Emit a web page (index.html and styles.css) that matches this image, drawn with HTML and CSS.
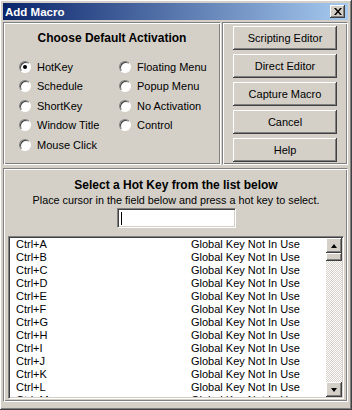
FILE: index.html
```html
<!DOCTYPE html>
<html lang="en">
<head>
    <meta charset="UTF-8">
    <meta name="viewport" content="width=device-width, initial-scale=1.0">
    <title>Add Macro</title>
    <link rel="stylesheet" href="styles.css">
</head>
<body>
    <div class="window">
        <div class="titlebar">
            <span class="title">Add Macro</span>
            <button class="close">
                <svg width="8" height="7" viewBox="0 0 8 7">
                    <path d="M0 0h2l2 2.5L6 0h2L5 3.5 8 7H6L4 4.5 2 7H0l3-3.5z" fill="#000"/>
                </svg>
            </button>
        </div>

        <div class="top">
            <div class="panel activation">
                <h2>Choose Default Activation</h2>
                <div class="radios">
                    <label class="radio"><span class="dot checked"></span>HotKey</label>
                    <label class="radio"><span class="dot"></span>Floating Menu</label>
                    <label class="radio"><span class="dot"></span>Schedule</label>
                    <label class="radio"><span class="dot"></span>Popup Menu</label>
                    <label class="radio"><span class="dot"></span>ShortKey</label>
                    <label class="radio"><span class="dot"></span>No Activation</label>
                    <label class="radio"><span class="dot"></span>Window Title</label>
                    <label class="radio"><span class="dot"></span>Control</label>
                    <label class="radio"><span class="dot"></span>Mouse Click</label>
                </div>
            </div>
            <div class="panel actions">
                <button class="btn">Scripting Editor</button>
                <button class="btn">Direct Editor</button>
                <button class="btn">Capture Macro</button>
                <button class="btn">Cancel</button>
                <button class="btn">Help</button>
            </div>
        </div>

        <div class="panel hotkeys">
            <h2>Select a Hot Key from the list below</h2>
            <p class="hint">Place cursor in the field below and press a hot key to select.</p>
            <div class="field"><span class="caret"></span></div>
            <div class="list">
                <div class="rows" id="rows"></div>
                <div class="scrollbar">
                    <div class="arrow up"><span></span></div>
                    <div class="thumb"></div>
                    <div class="track"></div>
                    <div class="arrow down"><span></span></div>
                </div>
            </div>
        </div>
    </div>
    <script>
        // fill the hot key list
        const rows = document.getElementById("rows");
        "ABCDEFGHIJKLM".split("").forEach((letter) => {
            const row = document.createElement("div");
            row.className = "row";
            row.innerHTML = `<span>Ctrl+${letter}</span><span>Global Key Not In Use</span>`;
            rows.appendChild(row);
        });
    </script>
</body>
</html>
```
FILE: styles.css
```css
body {
    margin: 0;
    font-family: "Liberation Sans", Arial, sans-serif;
    font-size: 11px;
    color: #000;
}

.window {
    width: 352px;
    height: 410px;
    box-sizing: border-box;
    padding: 3px 3px 7px 3px;
    background-color: #d4d0c8;
    border-right: 1px solid #404040;
    border-bottom: 1px solid #404040;
    box-shadow: inset 1px 1px #fff, inset -1px -1px #808080;
    display: flex;
    flex-direction: column;
}

.titlebar {
    height: 17px;
    display: flex;
    align-items: center;
    justify-content: space-between;
    padding: 0 3px 0 2px;
    background: linear-gradient(to right, #0a246a, #a6caf0);
    flex-shrink: 0;
}

.title {
    color: #fff;
    font-weight: bold;
    font-size: 11.5px;
}

.close {
    width: 15px;
    height: 13px;
    padding: 0;
    display: flex;
    align-items: center;
    justify-content: center;
    background-color: #d4d0c8;
    border: none;
    box-shadow: inset -1px -1px #404040, inset 1px 1px #fff, inset -2px -2px #808080;
}

.top {
    display: flex;
    margin-top: 2px;
    height: 143px;
    flex-shrink: 0;
}

.panel {
    box-sizing: border-box;
    border: 1px solid;
    border-color: #808080 #fff #fff #808080;
    box-shadow: inset 1px 1px #fff, inset -1px -1px #808080;
}

h2 {
    margin: 0;
    font-size: 12px;
    line-height: 14px;
    text-align: center;
}

.activation {
    width: 218px;
    padding: 8px 0 0 15px;
}

.activation h2 {
    margin-left: -15px;
}

.radios {
    display: grid;
    grid-template-columns: 100px 1fr;
    grid-auto-rows: 19.5px;
    margin-top: 12px;
}

.radio {
    display: flex;
    align-items: center;
    gap: 6px;
}

.dot {
    width: 12px;
    height: 12px;
    box-sizing: border-box;
    border-radius: 50%;
    background-color: #fff;
    border: 1px solid;
    border-color: #808080 #fff #fff #808080;
    box-shadow: inset 1px 1px #404040;
    display: flex;
    align-items: center;
    justify-content: center;
}

.dot.checked::after {
    content: "";
    width: 4px;
    height: 4px;
    border-radius: 50%;
    background-color: #000;
}

.actions {
    flex: 1;
    margin-left: 1px;
    padding: 3px 10px 0 10px;
    display: flex;
    flex-direction: column;
    gap: 4px;
}

.btn {
    height: 24px;
    padding: 0;
    font-family: "Liberation Sans", Arial, sans-serif;
    font-size: 11px;
    color: #000;
    background-color: #d4d0c8;
    border: none;
    box-shadow: inset -1px -1px #404040, inset 1px 1px #fff, inset -2px -2px #808080;
}

.hotkeys {
    margin-top: 3px;
    flex: 1;
    min-height: 0;
    padding: 9px 3px 2px 4px;
    display: flex;
    flex-direction: column;
    align-items: center;
}

.hint {
    margin: 2px 0 0 0;
    line-height: 13px;
    font-size: 10.8px;
}

.field {
    margin-top: 1px;
    width: 119px;
    height: 20px;
    flex-shrink: 0;
    box-sizing: border-box;
    background-color: #fff;
    border: 1px solid;
    border-color: #808080 #fff #fff #808080;
    box-shadow: inset 1px 1px #404040, inset -1px -1px #d4d0c8;
    padding: 3px 0 0 3px;
}

.caret {
    display: block;
    width: 1px;
    height: 13px;
    background-color: #000;
}

.list {
    align-self: stretch;
    margin-top: 8px;
    flex: 1;
    min-height: 0;
    display: flex;
    background-color: #fff;
    border: 1px solid;
    border-color: #808080 #fff #fff #808080;
    box-shadow: inset 1px 1px #404040, inset -1px -1px #d4d0c8;
    padding: 1px;
    overflow: hidden;
}

.rows {
    flex: 1;
    overflow: hidden;
    padding-left: 6px;
}

.row {
    display: grid;
    grid-template-columns: 175px 1fr;
    height: 13px;
    line-height: 13px;
}

.scrollbar {
    width: 16px;
    display: flex;
    flex-direction: column;
}

.arrow,
.thumb {
    background-color: #d4d0c8;
    box-shadow: inset -1px -1px #404040, inset 1px 1px #fff, inset -2px -2px #808080;
}

.arrow {
    height: 15px;
    display: flex;
    align-items: center;
    justify-content: center;
}

.arrow span {
    width: 0;
    height: 0;
    border-left: 3.5px solid transparent;
    border-right: 3.5px solid transparent;
}

.up span {
    border-bottom: 4px solid #000;
}

.down span {
    border-top: 4px solid #000;
}

.thumb {
    height: 8px;
}

.track {
    flex: 1;
    background: repeating-conic-gradient(#fff 0 25%, #d4d0c8 0 50%) 0 0 / 2px 2px;
}
```
